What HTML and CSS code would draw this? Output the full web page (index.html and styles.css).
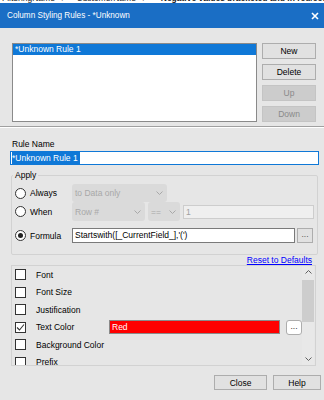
FILE: index.html
```html
<!DOCTYPE html>
<html lang="en">
<head>
  <meta charset="UTF-8" />
  <title>Column Styling Rules</title>
  <link rel="stylesheet" href="styles.css">
</head>
<body>
  <div class="behind">
    <div class="behind-line">
      <span class="behind-a">FilteringName &nbsp;▾</span>
      <span class="behind-b">CustomerName &nbsp;▾</span>
      <span class="behind-c">Negative values bracketed and in red/column</span>
    </div>
  </div>

  <div class="titlebar">
    <span class="title">Column Styling Rules - *Unknown</span>
    <svg class="close-x" width="8" height="8" viewBox="0 0 8 8"><path d="M1 1L7 7M7 1L1 7" stroke="#fff" stroke-width="1.6"/></svg>
  </div>

  <div class="dialog">
    <div class="rules">
      <div class="listbox">
        <div class="list-item selected">*Unknown Rule 1</div>
      </div>
      <div class="side-buttons">
        <button class="btn">New</button>
        <button class="btn">Delete</button>
        <button class="btn" disabled>Up</button>
        <button class="btn" disabled>Down</button>
      </div>
    </div>

    <div class="separator"></div>

    <div class="field-label">Rule Name</div>
    <div class="name-input"><span class="sel-text">*Unknown Rule 1</span></div>

    <fieldset class="apply">
      <legend>Apply</legend>
      <div class="apply-row row-always">
        <label class="radio"><span class="dot"></span>Always</label>
        <div class="combo combo-wide">to Data only <svg width="7" height="4" viewBox="0 0 7 4"><path d="M0.5 0.5L3.5 3.5L6.5 0.5" fill="none" stroke="#a8a8a8"/></svg></div>
      </div>
      <div class="apply-row row-when">
        <label class="radio"><span class="dot"></span>When</label>
        <div class="combo combo-row">Row # <svg width="7" height="4" viewBox="0 0 7 4"><path d="M0.5 0.5L3.5 3.5L6.5 0.5" fill="none" stroke="#a8a8a8"/></svg></div>
        <div class="combo combo-op">== <svg width="7" height="4" viewBox="0 0 7 4"><path d="M0.5 0.5L3.5 3.5L6.5 0.5" fill="none" stroke="#a8a8a8"/></svg></div>
        <div class="text-off">1</div>
      </div>
      <div class="apply-row row-formula">
        <label class="radio"><span class="dot on"></span>Formula</label>
        <div class="text-on">Startswith([_CurrentField_],'(')</div>
        <button class="dots-btn">...</button>
      </div>
    </fieldset>

    <div class="reset"><a href="#">Reset to Defaults</a></div>

    <div class="props">
      <div class="prop-list">
        <div class="prop"><span class="check"></span>Font</div>
        <div class="prop"><span class="check"></span>Font Size</div>
        <div class="prop"><span class="check"></span>Justification</div>
        <div class="prop">
          <span class="check"><svg width="9" height="9" viewBox="0 0 9 9"><path d="M1 4.5L3.5 7L8 1.5" fill="none" stroke="#333" stroke-width="1.1"/></svg></span>
          <span class="prop-name">Text Color</span>
          <span class="color-box">Red</span>
          <button class="dots-white">...</button>
        </div>
        <div class="prop"><span class="check"></span>Background Color</div>
        <div class="prop"><span class="check"></span>Prefix</div>
      </div>
      <div class="scrollbar">
        <svg class="arrow" width="7" height="4" viewBox="0 0 7 4"><path d="M0.5 3.5L3.5 0.5L6.5 3.5" fill="none" stroke="#606060"/></svg>
        <div class="thumb"></div>
        <div class="track"></div>
        <svg class="arrow" width="7" height="4" viewBox="0 0 7 4"><path d="M0.5 0.5L3.5 3.5L6.5 0.5" fill="none" stroke="#606060"/></svg>
      </div>
    </div>

    <div class="footer">
      <button class="btn btn-close">Close</button>
      <button class="btn btn-help">Help</button>
    </div>
  </div>
</body>
</html>
```

FILE: styles.css
```css
* {
  box-sizing: border-box;
}

body {
  margin: 0;
  width: 324px;
  height: 400px;
  overflow: hidden;
  background: #e6e6e6;
  font-family: 'Liberation Sans', Arial, sans-serif;
  font-size: 8.5px;
  color: #000;
}

/* window behind the dialog, only its last pixels show */
.behind {
  height: 3px;
  overflow: hidden;
  background: #fff;
}

.behind-line {
  margin-top: -7px;
  height: 10px;
  line-height: 10px;
  white-space: nowrap;
  color: #222;
}

.behind-a {
  display: inline-block;
  margin-left: 2px;
  width: 72px;
}

.behind-b {
  display: inline-block;
  width: 82px;
}

.behind-c {
  font-weight: bold;
}

.titlebar {
  height: 25px;
  background: #1a6ec5;
  color: #fff;
  display: flex;
  align-items: center;
  justify-content: space-between;
  padding: 0 5px 0 7px;
}

.title {
  font-size: 8.2px;
}

.close-x {
  display: block;
}

.dialog {
  padding-top: 15px;
}

.rules {
  display: flex;
  padding-left: 12px;
}

.listbox {
  width: 245px;
  height: 79px;
  background: #fff;
  border: 1px solid #8a8a8a;
}

.list-item {
  height: 11px;
  line-height: 11px;
  padding-left: 2px;
}

.list-item.selected {
  background: #0f78d7;
  color: #fff;
}

.side-buttons {
  margin-left: 5px;
  display: flex;
  flex-direction: column;
  gap: 5px;
}

.btn {
  width: 54px;
  height: 16px;
  padding: 0;
  background: #e1e1e1;
  border: 1px solid #adadad;
  font-family: inherit;
  font-size: 8.5px;
  color: #000;
}

.btn:disabled {
  background: #cccccc;
  border-color: #c4c4c4;
  color: #8a8a8a;
}

.separator {
  margin-top: 4px;
  height: 2px;
  border-top: 1px solid #a0a0a0;
  border-bottom: 1px solid #fff;
}

.field-label {
  margin: 10px 0 0 12px;
  height: 12px;
  line-height: 12px;
}

.name-input {
  margin: 1px 0 0 10px;
  width: 309px;
  height: 14px;
  background: #fff;
  border: 1px solid #0f78d7;
  padding: 0 0 0 1px;
  line-height: 12px;
}

.sel-text {
  display: inline-block;
  background: #0f78d7;
  color: #fff;
  padding-right: 2px;
}

.apply {
  margin: 5px 0 0 11px;
  width: 307px;
  padding: 4px 0 11px 0;
  border: 1px solid #d2d2d2;
  border-radius: 2px;
}

.apply legend {
  margin-left: 1px;
  padding: 0 2px;
  line-height: 10px;
  height: 10px;
}

.apply-row {
  display: flex;
  align-items: center;
}

.row-always {
  height: 18px;
}

.row-when {
  height: 19px;
}

.row-formula {
  height: 15px;
  margin-top: 7px;
}

.radio {
  width: 60px;
  display: flex;
  align-items: center;
  gap: 4px;
  padding-left: 3px;
}

.dot {
  width: 11px;
  height: 11px;
  border: 1px solid #333;
  border-radius: 50%;
  background: #fff;
  display: flex;
  align-items: center;
  justify-content: center;
}

.dot.on::after {
  content: "";
  width: 5px;
  height: 5px;
  border-radius: 50%;
  background: #222;
}

.combo {
  height: 100%;
  background: #dadada;
  border-radius: 3px;
  color: #a8a8a8;
  display: flex;
  align-items: center;
  justify-content: space-between;
  padding: 0 4px 0 3px;
}

.combo-wide {
  width: 95px;
}

.combo-row {
  width: 73px;
}

.combo-op {
  width: 32px;
  margin-left: 3px;
}

.text-off {
  margin-left: 3px;
  width: 131px;
  height: 14px;
  background: #efefef;
  border: 1px solid #cdcdcd;
  color: #a0a0a0;
  line-height: 12px;
  padding-left: 2px;
}

.text-on {
  width: 223px;
  height: 15px;
  background: #fff;
  border: 1px solid #7a7a7a;
  line-height: 13px;
  padding-left: 2px;
}

.dots-btn {
  margin-left: 2px;
  width: 16px;
  height: 15px;
  padding: 0 0 4px;
  background: #e1e1e1;
  border: 1px solid #adadad;
  font-family: inherit;
  font-size: 8.5px;
  color: #555;
}

.reset {
  height: 9px;
  line-height: 9px;
  text-align: right;
  padding-right: 12px;
  margin-top: 1px;
}

.reset a {
  color: #0000ff;
}

.props {
  margin-left: 11px;
  width: 305px;
  height: 101px;
  border: 1px solid #d2d2d2;
  display: flex;
}

.prop-list {
  flex: 1;
  overflow: hidden;
}

.prop {
  height: 17.5px;
  display: flex;
  align-items: center;
  padding-left: 3px;
}

.check {
  width: 11px;
  height: 11px;
  border: 1px solid #333;
  background: #fff;
  margin-right: 10px;
  display: flex;
  align-items: center;
  justify-content: center;
}

.prop-name {
  width: 73px;
}

.color-box {
  width: 171px;
  height: 14px;
  background: #ff0000;
  border: 1px solid #8a8a8a;
  color: #fff;
  line-height: 12px;
  padding-left: 2px;
}

.dots-white {
  margin-left: 6px;
  width: 16px;
  height: 15px;
  padding: 0 0 4px;
  background: #fff;
  border: 1px solid #adadad;
  border-radius: 3px;
  font-family: inherit;
  font-size: 8.5px;
  color: #333;
}

.scrollbar {
  width: 12px;
  margin-right: 1px;
  background: #e8e8e8;
  display: flex;
  flex-direction: column;
  align-items: center;
}

.scrollbar .arrow {
  margin: 4px 0;
}

.thumb {
  width: 12px;
  height: 42px;
  margin-top: 2px;
  background: #cdcdcd;
}

.track {
  flex: 1;
}

.footer {
  margin-top: 9px;
  display: flex;
  justify-content: flex-end;
  gap: 6px;
  padding-right: 3px;
}

.btn-close {
  width: 53px;
  height: 15px;
}

.btn-help {
  width: 48px;
  height: 15px;
}
```
